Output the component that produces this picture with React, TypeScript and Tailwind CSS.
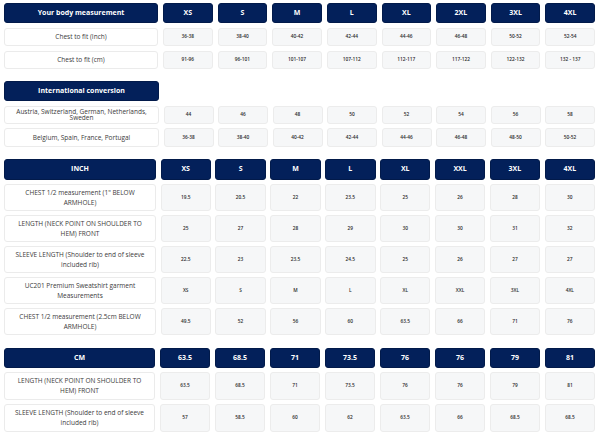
import { Fragment } from "react";

const sizes = ["XS", "S", "M", "L", "XL", "2XL", "3XL", "4XL"];

const bodyRows = [
	{ label: "Chest to fit (Inch)", values: ["36-38", "38-40", "40-42", "42-44", "44-46", "46-48", "50-52", "52-54"] },
	{ label: "Chest to fit (cm)", values: ["91-96", "96-101", "101-107", "107-112", "112-117", "117-122", "122-132", "132 - 137"] },
];

const conversionRows = [
	{ label: "Austria, Switzerland, German, Netherlands, Sweden", values: ["44", "46", "48", "50", "52", "54", "56", "58"] },
	{ label: "Belgium, Spain, France, Portugal", values: ["36-38", "38-40", "40-42", "42-44", "44-46", "46-48", "48-50", "50-52"] },
];

const inchSizes = ["XS", "S", "M", "L", "XL", "XXL", "3XL", "4XL"];

const inchRows = [
	{ label: "CHEST 1/2 measurement (1\" BELOW ARMHOLE)", values: ["19.5", "20.5", "22", "23.5", "25", "26", "28", "30"] },
	{ label: "LENGTH (NECK POINT ON SHOULDER TO HEM) FRONT", values: ["25", "27", "28", "29", "30", "30", "31", "32"] },
	{ label: "SLEEVE LENGTH (Shoulder to end of sleeve included rib)", values: ["22.5", "23", "23.5", "24.5", "25", "26", "27", "27"] },
	{ label: "UC201 Premium Sweatshirt garment Measurements", values: ["XS", "S", "M", "L", "XL", "XXL", "3XL", "4XL"] },
	{ label: "CHEST 1/2 measurement (2.5cm BELOW ARMHOLE)", values: ["49.5", "52", "56", "60", "63.5", "66", "71", "76"] },
];

const cmHeads = ["63.5", "68.5", "71", "73.5", "76", "76", "79", "81"];

const cmRows = [
	{ label: "LENGTH (NECK POINT ON SHOULDER TO HEM) FRONT", values: ["63.5", "68.5", "71", "73.5", "76", "76", "79", "81"] },
	{ label: "SLEEVE LENGTH (Shoulder to end of sleeve included rib)", values: ["57", "58.5", "60", "62", "63.5", "66", "68.5", "68.5"] },
];

function HeadCell({ children }: { children: React.ReactNode }) {
	return (
		<div className="flex items-center justify-center rounded-[3px] border border-[#021a4a] bg-[#03205a] text-[7px] font-bold text-white">
			{children}
		</div>
	);
}

function LabelCell({ children, tight = false }: { children: React.ReactNode; tight?: boolean }) {
	return (
		<div
			className={`flex items-center justify-center rounded-[3px] border border-[#ebebeb] bg-white px-[8px] text-center text-[6.5px] text-[#3a3a3a] ${tight ? "leading-[5.5px]" : "leading-[10px]"}`}
		>
			{children}
		</div>
	);
}

function ValueCell({ children }: { children: React.ReactNode }) {
	return (
		<div className="flex items-center justify-center rounded-[3px] border border-[#ececec] bg-[#f6f7f8] text-[4.8px] font-semibold text-[#2b2b2b]">
			{children}
		</div>
	);
}

function Rows({ rows, tight = false }: { rows: { label: string; values: string[] }[]; tight?: boolean }) {
	return (
		<>
			{rows.map((row) => (
				<Fragment key={row.label}>
					<LabelCell tight={tight}>{row.label}</LabelCell>
					{row.values.map((v, i) => (
						<ValueCell key={i}>{v}</ValueCell>
					))}
				</Fragment>
			))}
		</>
	);
}

export default function App() {
	return (
		<div className="h-[436px] w-[600px] overflow-hidden bg-white pl-[4px] pr-[5px] pt-[3px] font-['Open_Sans',sans-serif]">
			{/* Body measurement */}
			<div className="grid grid-cols-[154px_repeat(8,minmax(0,1fr))] grid-rows-[20px_18px_18px] gap-x-[5px] gap-y-[5px]">
				<HeadCell>Your body measurement</HeadCell>
				{sizes.map((s) => (
					<HeadCell key={s}>{s}</HeadCell>
				))}
				<Rows rows={bodyRows} />
			</div>

			{/* International conversion */}
			<div className="mt-[12px] grid grid-cols-[155px_repeat(8,minmax(0,1fr))] grid-rows-[20px_18px_19px] gap-x-[4.5px] gap-y-[4.5px]">
				<HeadCell>International conversion</HeadCell>
				<div className="col-span-8" />
				<Rows rows={conversionRows} tight />
			</div>

			{/* Inch */}
			<div className="mt-[12px] grid grid-cols-[152px_repeat(8,minmax(0,1fr))] grid-rows-[21px_repeat(5,27px)] gap-x-[4.5px] gap-y-[4px]">
				<HeadCell>INCH</HeadCell>
				{inchSizes.map((s) => (
					<HeadCell key={s}>{s}</HeadCell>
				))}
				<Rows rows={inchRows} />
			</div>

			{/* Cm */}
			<div className="mt-[13px] grid grid-cols-[151px_repeat(8,minmax(0,1fr))] grid-rows-[20px_28px_28px] gap-x-[5px] gap-y-[4px]">
				<HeadCell>CM</HeadCell>
				{cmHeads.map((s, i) => (
					<HeadCell key={i}>{s}</HeadCell>
				))}
				<Rows rows={cmRows} />
			</div>
		</div>
	);
}
